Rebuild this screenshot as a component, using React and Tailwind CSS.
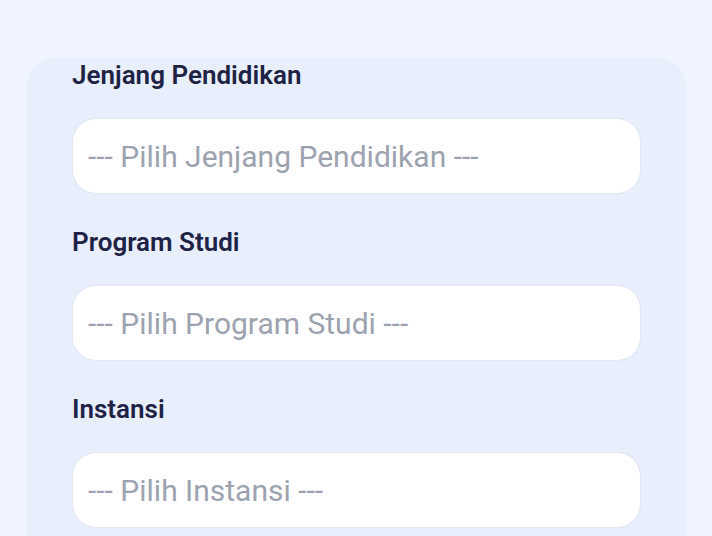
import React from 'react';

const fields = [
  { label: 'Jenjang Pendidikan', placeholder: '--- Pilih Jenjang Pendidikan ---' },
  { label: 'Program Studi', placeholder: '--- Pilih Program Studi ---' },
  { label: 'Instansi', placeholder: '--- Pilih Instansi ---' },
];

// Satu blok label + select
const Field = ({ label, placeholder }) => (
  <div className="mb-[33px]">
    <div className="text-[26px] leading-[30px] font-semibold text-[#1e2247]">{label}</div>
    <div className="mt-[28px] h-[76px] bg-white border border-[#e1e6ef] rounded-[24px] flex items-center px-[15px]">
      <span className="text-[30px] text-[#9ca3af]">{placeholder}</span>
    </div>
  </div>
);

export default function App() {
  return (
    <div
      className="w-[712px] h-[536px] overflow-hidden bg-[#eff4fe] pt-[58px] pl-[27px]"
      style={{ fontFamily: 'Roboto, "Liberation Sans", sans-serif' }}
    >
      <div className="w-[659px] h-[600px] bg-[#e8eefb] rounded-[28px] pt-[2px] pl-[45px] pr-[45px]">
        {fields.map((f) => (
          <Field key={f.label} label={f.label} placeholder={f.placeholder} />
        ))}
      </div>
    </div>
  );
}
